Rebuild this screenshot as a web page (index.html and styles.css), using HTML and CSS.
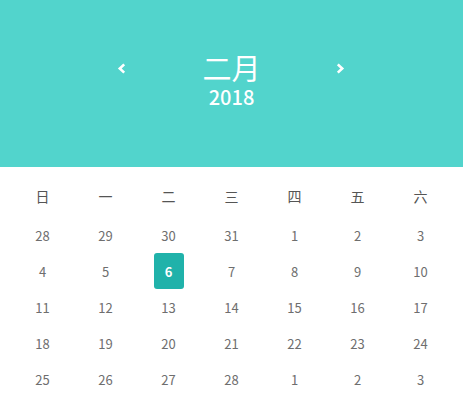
FILE: index.html
```html
<!DOCTYPE html>
<html lang="zh">
<head>
<meta charset="utf-8">
<link rel="stylesheet" href="styles.css">
</head>
<body>
<div class="cal">
  <div class="head">
    <div class="nav">
      <span class="arrow"><svg width="10" height="11" viewBox="0 0 10 11"><path d="M7.2 1.4 L2.8 5.5 L7.2 9.6" fill="none" stroke="#fff" stroke-width="2.6"/></svg></span>
      <div class="title">
        <div class="month">二月</div>
        <div class="year">2018</div>
      </div>
      <span class="arrow"><svg width="10" height="11" viewBox="0 0 10 11"><path d="M2.8 1.4 L7.2 5.5 L2.8 9.6" fill="none" stroke="#fff" stroke-width="2.6"/></svg></span>
    </div>
  </div>
  <div class="grid">
    <div class="wd">日</div><div class="wd">一</div><div class="wd">二</div><div class="wd">三</div><div class="wd">四</div><div class="wd">五</div><div class="wd">六</div>
    <div class="d">28</div><div class="d">29</div><div class="d">30</div><div class="d">31</div><div class="d">1</div><div class="d">2</div><div class="d">3</div>
    <div class="d">4</div><div class="d">5</div><div class="d"><span class="sel">6</span></div><div class="d">7</div><div class="d">8</div><div class="d">9</div><div class="d">10</div>
    <div class="d">11</div><div class="d">12</div><div class="d">13</div><div class="d">14</div><div class="d">15</div><div class="d">16</div><div class="d">17</div>
    <div class="d">18</div><div class="d">19</div><div class="d">20</div><div class="d">21</div><div class="d">22</div><div class="d">23</div><div class="d">24</div>
    <div class="d">25</div><div class="d">26</div><div class="d">27</div><div class="d">28</div><div class="d">1</div><div class="d">2</div><div class="d">3</div>
  </div>
</div>
</body>
</html>
```
FILE: styles.css
```css
html, body { margin: 0; padding: 0; background: #fff; }
body { font-family: "Noto Sans CJK SC", "Noto Sans", sans-serif; }
.cal { width: 463px; }
.head {
  background: #52d4cc;
  height: 167px;
  box-sizing: border-box;
  padding-top: 49px;
  display: flex;
  justify-content: center;
  color: #fff;
}
.nav {
  display: flex;
  align-items: flex-start;
}
.arrow {
  width: 30px;
  display: flex;
  justify-content: center;
  margin-top: 14px;
}
.arrow:first-child { margin-left: -2px; }
.arrow:last-child { margin-left: -2px; }
.title {
  width: 190px;
  text-align: center;
}
.month { font-size: 29px; line-height: 36px; }
.year { font-size: 20px; line-height: 22px; font-weight: 500; margin-top: 1px; }
.grid {
  display: grid;
  grid-template-columns: repeat(7, 63px);
  margin: 0 11px;
  padding-top: 11px;
  color: #6e6e6e;
  font-size: 13px;
}
.wd { height: 36px; display: flex; align-items: center; justify-content: center; font-size: 14px; color: #555; margin-bottom: 3px; }
.d { height: 36px; display: flex; align-items: center; justify-content: center; }
.sel {
  width: 30px; height: 36px;
  background: #20b2aa;
  color: #fff;
  font-weight: bold;
  border-radius: 3px;
  display: flex; align-items: center; justify-content: center;
}
```
